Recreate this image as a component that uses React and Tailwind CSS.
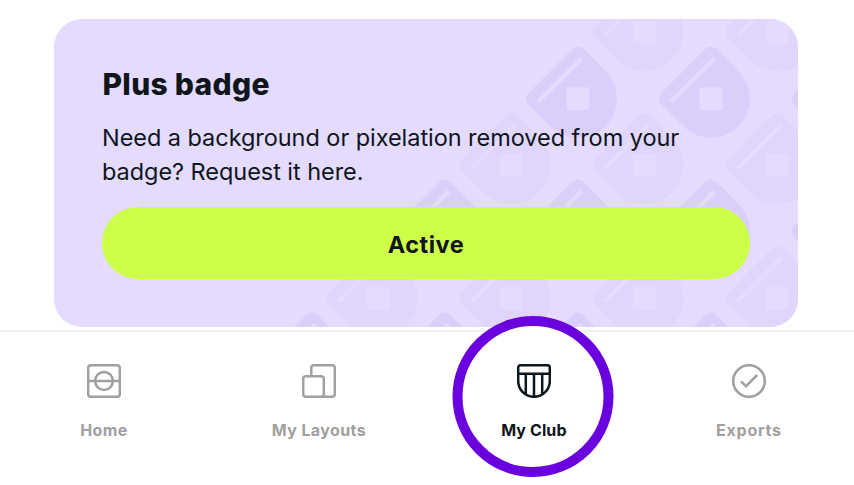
const DARK = "#dacffb";
const LIGHT = "#dfd5fd";
const BASE = "#e4dbff";

// centre of every badge in the card's backdrop
const badges = [
  { x: 590.5, y: 13.2, fill: LIGHT },
  { x: 723.5, y: 13.2, fill: LIGHT },
  { x: 524, y: 79.6, fill: DARK },
  { x: 657, y: 79.6, fill: DARK },
  { x: 790, y: 79.6, fill: DARK },
  { x: 457.5, y: 146.1, fill: LIGHT },
  { x: 590.5, y: 146.1, fill: LIGHT },
  { x: 723.5, y: 146.1, fill: LIGHT },
  { x: 391, y: 212.6, fill: DARK },
  { x: 524, y: 212.6, fill: DARK },
  { x: 657, y: 212.6, fill: DARK },
  { x: 790, y: 212.6, fill: DARK },
  { x: 324.5, y: 279.1, fill: LIGHT },
  { x: 457.5, y: 279.1, fill: LIGHT },
  { x: 590.5, y: 279.1, fill: LIGHT },
  { x: 723.5, y: 279.1, fill: LIGHT },
  { x: 258, y: 345.6, fill: DARK },
  { x: 391, y: 345.6, fill: DARK },
  { x: 524, y: 345.6, fill: DARK },
  { x: 657, y: 345.6, fill: DARK },
];

const BadgePattern = () => (
  <svg className="absolute inset-0 h-full w-full" viewBox="0 0 743.5 308.5" preserveAspectRatio="none">
    {badges.map((b) => (
      <g key={`${b.x}-${b.y}`} transform={`translate(${b.x} ${b.y})`}>
        <g transform="rotate(-45)">
          <path d="M-31-39H31a8 8 0 0 1 8 8V0a39 39 0 0 1-78 0V-31a8 8 0 0 1 8-8z" fill={b.fill} />
          <rect x="-31" y="-28" width="62" height="4.4" fill={BASE} />
        </g>
        <rect x="-11.3" y="-11.3" width="22.6" height="22.6" fill={BASE} />
      </g>
    ))}
  </svg>
);

const Icon = ({ children }) => (
  <svg width="34" height="34" viewBox="0 0 34 34" fill="none" stroke="currentColor" strokeWidth="2.5" strokeLinejoin="round">
    {children}
  </svg>
);

const HomeIcon = () => (
  <Icon>
    <rect x="1.2" y="1.2" width="31.6" height="31.6" rx="2.6" />
    <circle cx="17" cy="17" r="8.9" />
    <path d="M1.2 17h31.6" />
  </Icon>
);

const LayoutsIcon = () => (
  <Icon>
    <rect x="1.2" y="12.2" width="20.6" height="20.6" rx="2.6" />
    <path d="M9.3 12V3.8a2.6 2.6 0 0 1 2.6-2.6h18.3a2.6 2.6 0 0 1 2.6 2.6v26.4a2.6 2.6 0 0 1-2.6 2.6H19.5" />
  </Icon>
);

const ClubIcon = () => (
  <Icon>
    <path d="M3.6 1.2h26.8a2.4 2.4 0 0 1 2.4 2.4V17a15.8 15.8 0 0 1-31.6 0V3.6a2.4 2.4 0 0 1 2.4-2.4z" />
    <path d="M1.2 9.7h31.6M8.8 9.7v20M17 9.7v23M25.2 9.7v20" />
  </Icon>
);

const ExportsIcon = () => (
  <Icon>
    <circle cx="17" cy="17" r="15.8" />
    <path d="M9 17.3l5 4.9L25.2 11" strokeLinejoin="miter" />
  </Icon>
);

const tabs = [
  { label: "Home", icon: HomeIcon, spacing: "tracking-[0.35px]" },
  { label: "My Layouts", icon: LayoutsIcon, spacing: "tracking-[0.4px]" },
  { label: "My Club", icon: ClubIcon, spacing: "tracking-[0.1px]", active: true },
  { label: "Exports", icon: ExportsIcon, spacing: "tracking-[0.75px]" },
];

const App = () => {
  return (
    <div className="flex h-[485px] w-[854px] flex-col overflow-hidden bg-white font-['Inter',sans-serif] text-[#0e151b]">
      <main className="h-[330px] shrink-0 pl-[54.4px] pt-[18.5px]">
        <section className="relative h-[308.5px] w-[743.4px] overflow-hidden rounded-[28px] bg-[#e4dbff]">
          <BadgePattern />
          <div className="relative pl-[47.6px] pr-[47.8px] pt-[45.5px]">
            <h2 className="whitespace-nowrap pl-[0.5px] text-[30px] font-extrabold leading-[40px] tracking-[0.3px]">
              Plus badge
            </h2>
            <p className="mt-[17px] whitespace-nowrap text-[23.5px] leading-[34px] tracking-[-0.05px]">
              Need a background or pixelation removed from your
              <br />
              badge? Request it here.
            </p>
            <button className="mt-[18px] h-[72px] w-full rounded-full bg-[#ceff48] pt-[3px] text-[23.5px] font-bold tracking-[0.5px]">
              Active
            </button>
          </div>
        </section>
      </main>

      <nav className="-ml-[4px] -mr-[2px] grid h-[155px] shrink-0 grid-cols-4 border-t-2 border-[#f1f1f2]">
        {tabs.map(({ label, icon: TabIcon, spacing, active }) => (
          <div
            key={label}
            className={`relative flex flex-col items-center pt-[32px] ${active ? "text-[#0e151b]" : "text-[#a0a0a0]"}`}
          >
            {active && (
              <span className="absolute left-1/2 top-[-16px] -ml-[0.5px] h-[161px] w-[161px] -translate-x-1/2 rounded-full border-[10px] border-[#6a00de] bg-white" />
            )}
            <span className="relative">
              <TabIcon />
            </span>
            <span className={`relative mt-[20px] whitespace-nowrap pl-[0.8px] text-[16px] font-bold leading-6 ${spacing}`}>
              {label}
            </span>
          </div>
        ))}
      </nav>
    </div>
  );
};

export default App;
